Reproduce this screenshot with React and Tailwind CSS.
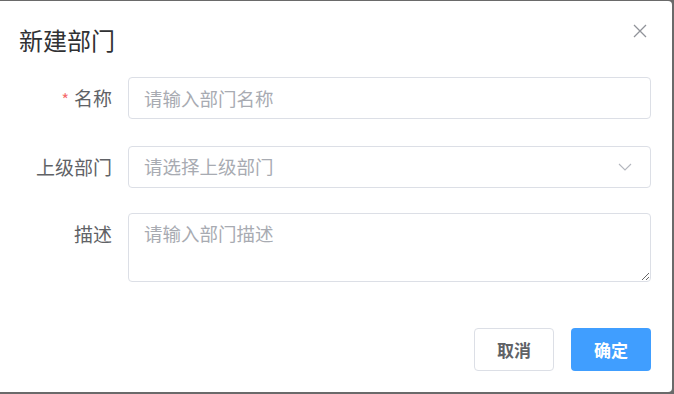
import React from 'react';

// Diálogo "新建部门" no estilo Element: título, formulário de três campos e ações.

const font = { fontFamily: '"Noto Sans CJK SC", "Noto Sans", sans-serif' };

function FormRow({ label, required, children, className = '' }) {
  return (
    <div className={`flex ${className}`}>
      <label className="w-[112px] shrink-0 text-right text-[19px] leading-[42px] text-[#606266]">
        {required && <span className="mr-[5px] text-[16px] text-[#f56c6c]">*</span>}
        {label}
      </label>
      <div className="ml-[16px] w-[523px]">{children}</div>
    </div>
  );
}

export default function App() {
  return (
    <div className="w-[674px] h-[394px] bg-[#6a6a6a] pt-[1px] pr-[2px] pb-[2px]" style={font}>
      <div className="h-[391px] w-[672px] rounded-r-[4px] bg-white">
        <div className="flex items-start justify-between pl-[19px] pr-[24px] pt-[25px]">
          <h1 className="text-[24px] leading-[28px] text-[#303133]">新建部门</h1>
          <svg width="16" height="16" viewBox="0 0 16 16" className="mt-[-3px] text-[#909399]">
            <path d="M2 2 L14 14 M14 2 L2 14" stroke="currentColor" strokeWidth="1.3" fill="none" />
          </svg>
        </div>

        <div className="mt-[23px]">
          <FormRow label="名称" required>
            <input
              placeholder="请输入部门名称"
              className="h-[42px] w-full rounded-[4px] border border-[#dcdfe6] px-[15px] text-[18.5px] text-[#606266] outline-none placeholder:text-[#a8abb2]"
            />
          </FormRow>
          <FormRow label="上级部门" className="mt-[26px]">
            <div className="flex h-[42px] w-full items-center justify-between rounded-[4px] border border-[#dcdfe6] pl-[15px] pr-[18px]">
              <span className="text-[18.5px] text-[#a8abb2]">请选择上级部门</span>
              <svg width="14" height="8" viewBox="0 0 14 8" className="text-[#b4b7be]">
                <path d="M1 1 L7 7 L13 1" stroke="currentColor" strokeWidth="1.1" fill="none" />
              </svg>
            </div>
          </FormRow>
          <FormRow label="描述" className="mt-[25px]">
            <textarea
              placeholder="请输入部门描述"
              className="block h-[69px] w-full resize-y rounded-[4px] border border-[#dcdfe6] px-[15px] py-[7px] text-[18.5px] leading-[24px] text-[#606266] outline-none placeholder:text-[#a8abb2]"
            />
          </FormRow>
        </div>

        <div className="mt-[46px] flex justify-end gap-[17px] pr-[21px]">
          <button className="h-[43px] w-[80px] rounded-[4px] border border-[#dcdfe6] bg-white text-[17px] font-bold text-[#606266]">
            取消
          </button>
          <button className="h-[43px] w-[80px] rounded-[4px] bg-[#409eff] text-[17px] font-bold text-white">
            确定
          </button>
        </div>
      </div>
    </div>
  );
}
